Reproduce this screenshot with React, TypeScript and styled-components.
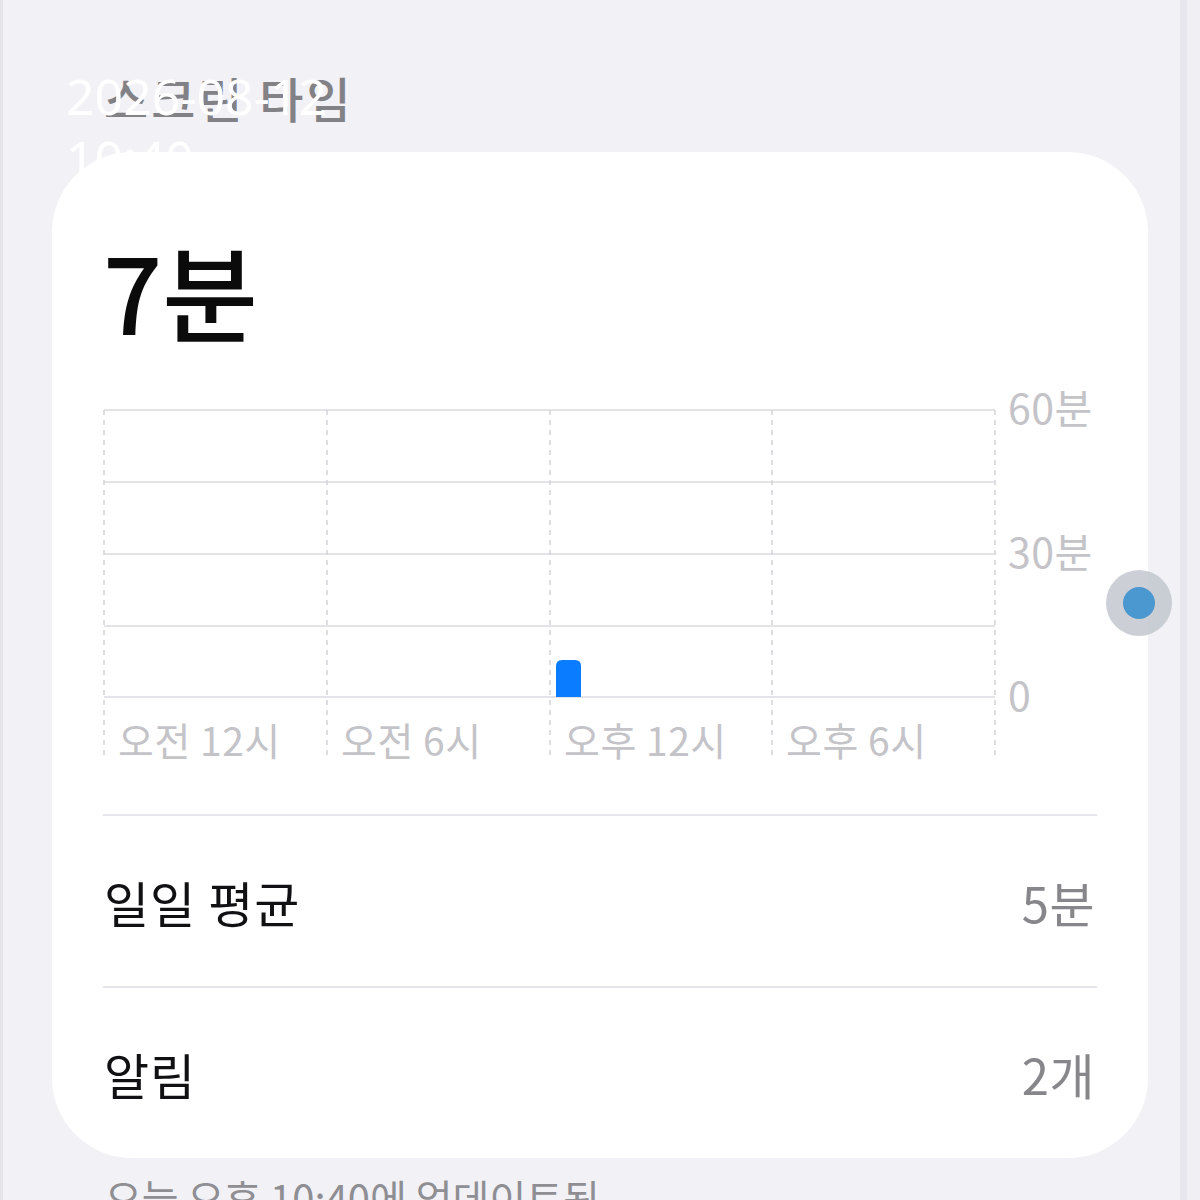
import styled, { createGlobalStyle } from 'styled-components';

const GlobalStyle = createGlobalStyle`
  html, body {
    margin: 0;
    padding: 0;
  }
  body {
    width: 1200px;
    height: 1200px;
    overflow: hidden;
    font-family: "Noto Sans CJK KR", "Noto Sans", sans-serif;
    background: linear-gradient(
      to right,
      #e3e3e8 0 3px,
      #f1f1f6 3px 1180px,
      #e6e6ec 1180px 1187px,
      #efeff4 1187px
    );
  }
`;

const Screen = styled.div`
  position: relative;
  width: 1200px;
  height: 1200px;
  display: flex;
  flex-direction: column;
  padding-left: 52px;
  box-sizing: border-box;
  & > * {
    flex-shrink: 0;
  }
`;

const Header = styled.div`
  height: 152px;
  display: flex;
  align-items: flex-start;
  padding: 66px 0 0 52px;
  box-sizing: border-box;
`;

const Title = styled.h1`
  margin: 0;
  font-size: 48px;
  font-weight: 500;
  line-height: 62px;
  color: #818186;
  letter-spacing: 3px;
`;

const Stamp = styled.div`
  position: absolute;
  left: 66px;
  top: 65px;
  color: #ffffff;
  font-family: "Noto Sans", sans-serif;
  font-size: 50px;
  line-height: 62px;
  z-index: 0;
`;

const Card = styled.section`
  position: relative;
  z-index: 1;
  width: 1096px;
  background: #ffffff;
  border-radius: 80px;
  padding: 0 51px;
  box-sizing: border-box;
  display: flex;
  flex-direction: column;
`;

const Total = styled.div`
  margin-top: 82px;
  font-size: 104px;
  font-weight: 500;
  line-height: 112px;
  color: #0b0b0c;
`;

const Chart = styled.svg`
  display: block;
  margin-top: 54px;
  margin-bottom: 54px;
  overflow: visible;
`;

const Row = styled.div<{ $divider?: boolean }>`
  height: 172px;
  display: flex;
  align-items: center;
  justify-content: space-between;
  border-top: ${({ $divider }) => ($divider ? '2px solid #e5e5ea' : 'none')};
  box-sizing: border-box;
`;

const RowLabel = styled.span`
  font-size: 49px;
  color: #111113;
  letter-spacing: 1px;
  padding-left: 1px;
`;

const RowValue = styled.span`
  font-size: 49px;
  color: #86868b;
  letter-spacing: 0.5px;
  padding-right: 2px;
`;

const Footnote = styled.p`
  margin: 12px 0 0 53px;
  font-size: 40px;
  line-height: 54px;
  color: #8e8e93;
  white-space: nowrap;
`;

const Scrubber = styled.div`
  position: absolute;
  left: 1106px;
  top: 570px;
  width: 66px;
  height: 66px;
  border-radius: 50%;
  background: rgba(190, 195, 202, 0.78);
  display: flex;
  align-items: center;
  justify-content: center;
  z-index: 2;
`;

const ScrubberDot = styled.div`
  width: 32px;
  height: 32px;
  border-radius: 50%;
  background: #4b97cf;
`;

const gridY = [10, 82, 154, 226, 297];
const gridX = [1, 224, 447, 669, 892];
const hours = ['오전 12시', '오전 6시', '오후 12시', '오후 6시'];
const yLabels = [
  { y: 10, text: '60분' },
  { y: 154, text: '30분' },
  { y: 297, text: '0' },
];

const UsageChart = () => (
  <Chart width={994} height={360} viewBox="0 0 994 360">
    {gridY.map((y) => (
      <line key={y} x1={1} x2={892} y1={y} y2={y} stroke="#e3e3e8" strokeWidth={2} />
    ))}
    {gridX.map((x) => (
      <line
        key={x}
        x1={x}
        x2={x}
        y1={10}
        y2={360}
        stroke="#d4d4d9"
        strokeWidth={1.5}
        strokeDasharray="5 5"
      />
    ))}
    <path d="M453 297 V266 Q453 260 459 260 H472 Q478 260 478 266 V297 Z" fill="#0a7cff" />
    {yLabels.map((l) => (
      <text
        key={l.text}
        x={905}
        y={l.y + 14}
        fontSize={41}
        letterSpacing={0.5}
        fill="#c3c3c8"
        fontFamily='"Noto Sans CJK KR", sans-serif'
      >
        {l.text}
      </text>
    ))}
    {hours.map((h, i) => (
      <text
        key={h}
        x={gridX[i] + 14}
        y={356}
        fontSize={39}
        letterSpacing={0.5}
        fill="#c3c3c8"
        fontFamily='"Noto Sans CJK KR", sans-serif'
      >
        {h}
      </text>
    ))}
  </Chart>
);

const App = () => {
  return (
    <>
      <GlobalStyle />
      <Screen>
        <Stamp>
          2026-08-12
          <br />
          10:40
        </Stamp>
        <Header>
          <Title>스크린 타임</Title>
        </Header>
        <Card>
          <Total>7분</Total>
          <UsageChart />
          <Row $divider>
            <RowLabel>일일 평균</RowLabel>
            <RowValue>5분</RowValue>
          </Row>
          <Row $divider>
            <RowLabel>알림</RowLabel>
            <RowValue>2개</RowValue>
          </Row>
        </Card>
        <Footnote>오늘 오후 10:40에 업데이트됨</Footnote>
        <Scrubber>
          <ScrubberDot />
        </Scrubber>
      </Screen>
    </>
  );
};

export default App;
